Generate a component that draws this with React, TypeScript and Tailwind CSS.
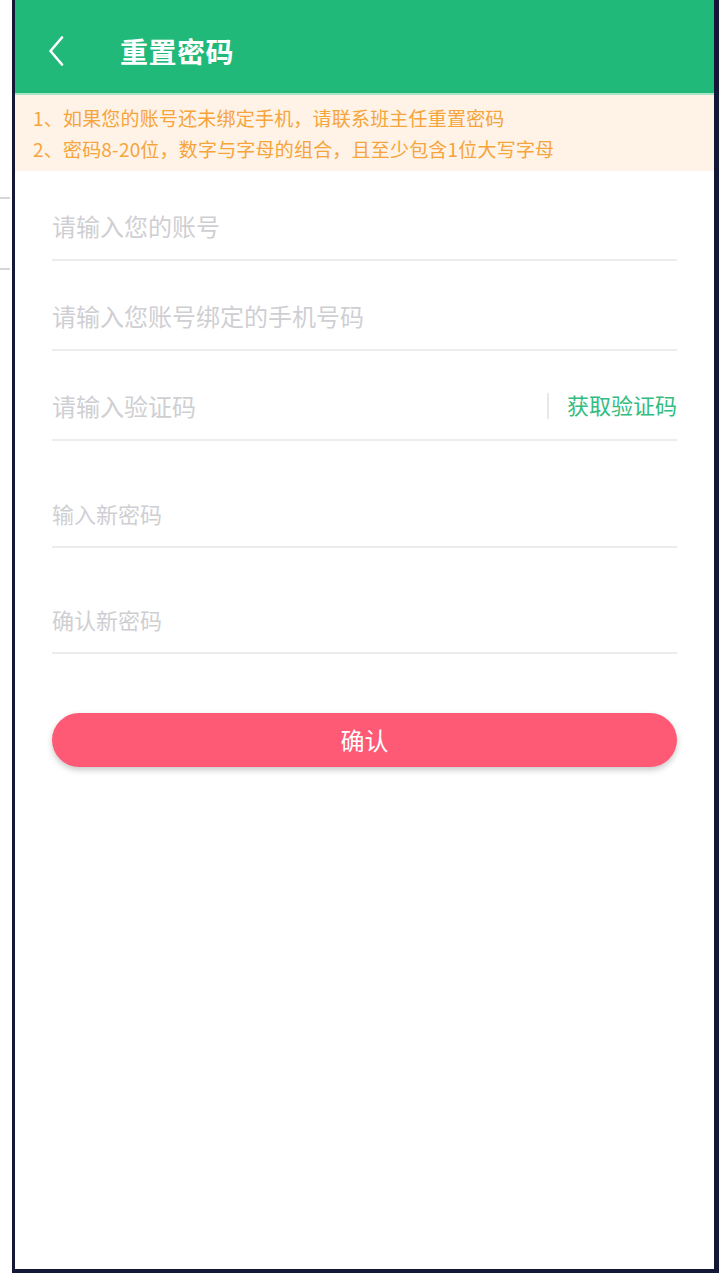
import React from 'react';

const CJK = { fontFamily: '"Noto Sans CJK SC", "Noto Sans", sans-serif' };

function Field({ placeholder, big, className, right }: { placeholder: string; big?: boolean; className: string; right?: React.ReactNode }) {
  return (
    <div className={`flex items-center h-[68px] border-b-2 border-[#ececee] ${className}`}>
      <span className={`flex-1 text-[#cfcfd3] ${big ? 'text-[24px]' : 'text-[22px]'}`}>{placeholder}</span>
      {right}
    </div>
  );
}

export default function App() {
  return (
    <div className="relative w-[720px] h-[1280px] bg-white overflow-hidden" style={CJK}>
      {/* stray lines left of the phone frame */}
      <div className="absolute left-0 top-[197px] w-[10px] h-[2px] bg-[#d6d6da]" />
      <div className="absolute left-0 top-[268px] w-[10px] h-[2px] bg-[#d6d6da]" />

      <div className="ml-[12px] w-[707px] h-[1273px] border-l-[3px] border-r-[5px] border-b-[4px] border-[#141736] flex flex-col bg-white">
        {/* header */}
        <div className="h-[95px] bg-[#21b97a] border-b-2 border-[#a9e4c8] flex items-center pl-[33px] pt-[9px]">
          <svg width="16" height="30" viewBox="0 0 16 30" className="shrink-0">
            <polyline points="14,1.5 2.5,15 14,28.5" fill="none" stroke="white" strokeWidth="2.6" strokeLinecap="round" strokeLinejoin="round" />
          </svg>
          <div className="ml-[56px] text-white text-[28px] font-bold tracking-[0.5px] leading-none">重置密码</div>
        </div>

        {/* notice */}
        <div className="bg-[#fef3e6] py-[7px] pl-[18px] text-[#f6a43c] text-[19px] tracking-[0.2px] leading-[31px]">
          <div>1、如果您的账号还未绑定手机，请联系班主任重置密码</div>
          <div>2、密码8-20位，数字与字母的组合，且至少包含1位大写字母</div>
        </div>

        {/* form */}
        <div className="flex flex-col mx-[37px]">
          <Field placeholder="请输入您的账号" big className="mt-[22px]" />
          <Field placeholder="请输入您账号绑定的手机号码" big className="mt-[22px]" />
          <Field
            placeholder="请输入验证码"
            big
            className="mt-[22px]"
            right={
              <div className="flex items-center">
                <div className="w-[2px] h-[26px] bg-[#e8e8ea] mr-[18px]" />
                <span className="text-[22px] text-[#33bd80] -mt-[3px]">获取验证码</span>
              </div>
            }
          />
          <Field placeholder="输入新密码" className="mt-[39px]" />
          <Field placeholder="确认新密码" className="mt-[38px]" />

          <button className="mt-[59px] h-[54px] rounded-full bg-[#fe5a76] text-white text-[24px] shadow-[0_3px_6px_rgba(0,0,0,0.22)]">
            确认
          </button>
        </div>
      </div>
    </div>
  );
}
